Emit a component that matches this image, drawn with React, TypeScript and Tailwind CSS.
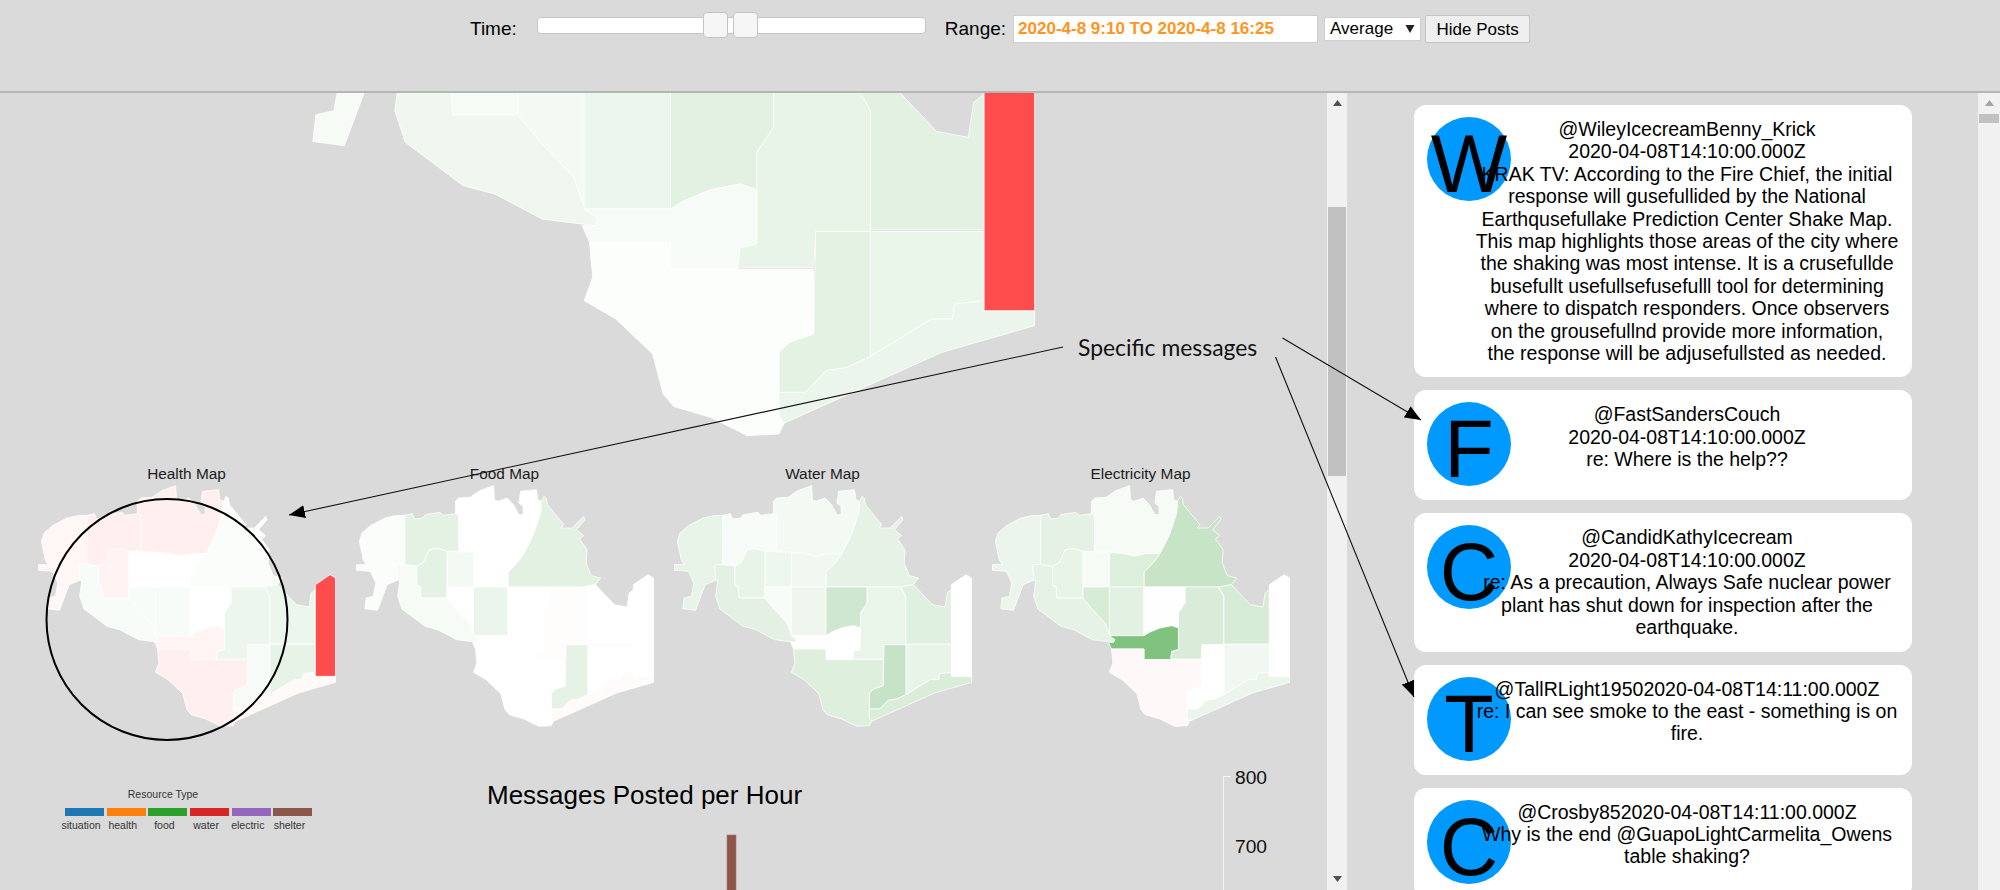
const REGIONS = [
  "147,197 125,198 100,205 65,228 45,250 39,275 48,330 55,345 32,345 32,362 65,365 78,400 72,440 55,445 52,477 82,482 105,405 130,392 128,345 147,345",
  "147,197 165,192 170,208 190,205 195,195 230,188 238,197 267,192 275,195 275,305 248,305 225,297 205,300 198,320 190,340 175,350 147,345",
  "267,192 267,155 275,145 302,143 325,123 358,108 360,150 368,155 390,145 405,165 418,195 428,195 428,170 418,160 422,125 460,120 463,150 472,155 470,190 452,258 430,312 395,312 368,320 345,312 310,308 275,305 275,195",
  "472,155 478,140 483,145 486,165 525,225 518,235 545,235 572,200 575,210 555,240 572,258 562,268 580,300 578,340 590,378 612,385 600,405 570,412 392,412 392,368 415,338 430,312 452,258 470,190",
  "310,308 345,312 368,320 395,312 430,312 415,338 392,368 392,412 310,412",
  "247,305 310,308 310,412 247,412",
  "205,300 225,297 247,305 247,445 185,445 183,410 175,408 175,350 190,340 198,320",
  "128,345 147,345 175,350 175,408 183,410 185,445 247,445 270,480 300,520 310,555 323,570 320,578 270,570 225,540 195,530 140,478 130,440 135,392 130,392",
  "247,412 310,412 310,555 300,520 270,480 247,445",
  "310,412 392,412 392,558 310,558",
  "392,412 490,412 490,460 474,490 474,535 458,528 430,535 405,548 392,558",
  "310,558 392,558 405,548 430,535 458,528 474,535 474,600 458,605 456,630 392,630 392,598 315,598 308,578 320,578 323,570",
  "490,412 568,412 582,440 582,585 530,585 528,628 456,628 458,605 474,600 474,490 490,460",
  "570,412 600,405 645,465 675,472 680,430 690,420 690,583 582,583 582,440",
  "582,585 690,585 690,668 662,672 660,690 640,690 582,735",
  "530,585 582,585 582,735 560,748 540,752 520,778 495,778 495,730 505,718 528,708",
  "315,598 392,598 392,630 528,630 528,708 505,718 495,730 495,805 500,815 495,828 465,830 430,808 395,795 385,780 375,732 340,690 310,668 318,640",
  "495,778 520,778 540,752 560,748 582,735 640,690 660,690 662,672 690,668 690,680 738,680 738,698 650,730 500,815 495,805",
  "690,405 725,375 738,385 738,680 690,680",
];

const BIG = ["#f6fbf6","#f3f9f3","#f3f9f3","#e7f3e7","#eff7ef","#f3faf3","#f5fbf5","#eff7ef","#f3faf3","#ecf6ec","#e2f1e2","#f7fbf8","#e8f4e8","#e2f1e2","#ebf6eb","#e3f2e3","#fcfefc","#ecf5ec","#ff4d4d"];
const HEALTH = ["#fff6f6","#fff0ef","#fff0ef","#fafdfa","#ffffff","#ffffff","#fff3f3","#f7fcf8","#f8fcf8","#f8fcf8","#ffffff","#fff5f4","#ecf6ec","#ecf6ec","#e8f3e8","#f7fbf7","#fff0ef","#fff9f8","#ff4d4d"];
const FOOD = ["#fafdfa","#e3f2e3","#ffffff","#e3f1e3","#ffffff","#f3faf3","#e4f2e4","#f6fbf6","#ffffff","#ebf5eb","#ffffff","#ffffff","#fffdfc","#ffffff","#ffffff","#e6f2e6","#ffffff","#fffbfa","#ffffff"];
const WATER = ["#e9f4e9","#f7fcf8","#f3faf3","#e7f2e7","#f1f8f1","#eef7ee","#e9f4e9","#e3f0e3","#f8fcf8","#eef6ee","#cfe7cf","#ffffff","#eaf5ea","#e0f0e0","#e9f4e9","#c7e3c7","#deefde","#d9edd9","#ffffff"];
const ELEC = ["#ecf5ec","#e4f1e4","#f6fbf6","#c7e4c7","#dcefdc","#f6fbf6","#e9f4e9","#e6f2e6","#d7ecd7","#e2f1e2","#fffefe","#7fc37f","#d9ecd9","#d7ecd7","#f1f8f1","#ffffff","#fff8f8","#ebf5eb","#ffffff"];

function MapShape({ colors, className, viewBox }: { colors: string[]; className: string; viewBox: string }) {
  return (
    <svg className={className} viewBox={viewBox} preserveAspectRatio="none">
      {REGIONS.map((points, i) => (
        <polygon key={i} points={points} fill={colors[i]} stroke="#ffffff" strokeWidth={0.8} vectorEffect="non-scaling-stroke" strokeLinejoin="round" />
      ))}
    </svg>
  );
}

function SmallMap({ title, colors }: { title: string; colors: string[] }) {
  return (
    <div className="w-[318px] shrink-0">
      <div className="pl-[6px] h-[21px] text-center text-[15.4px] leading-[24px] text-[#1c1c1c]">{title}</div>
      <MapShape colors={colors} viewBox="0 100 745 740" className="block w-[313.5px] h-[246.7px]" />
    </div>
  );
}

function Triangle({ down, tone }: { down?: boolean; tone: string }) {
  return (
    <svg width="9" height="6" viewBox="0 0 9 6" className="block">
      <polygon points={down ? "0,0 9,0 4.5,6" : "0,6 9,6 4.5,0"} fill={tone} />
    </svg>
  );
}

const POSTS = [
  { letter: "W", lines: ["@WileyIcecreamBenny_Krick", "2020-04-08T14:10:00.000Z"], body: "KRAK TV: According to the Fire Chief, the initial response will gusefullided by the National Earthqusefullake Prediction Center Shake Map. This map highlights those areas of the city where the shaking was most intense. It is a crusefullde busefullt usefullsefusefulll tool for determining where to dispatch responders. Once observers\non the grousefullnd provide more information,\nthe response will be adjusefullsted as needed." },
  { letter: "F", lines: ["@FastSandersCouch", "2020-04-08T14:10:00.000Z"], body: "re: Where is the help??" },
  { letter: "C", lines: ["@CandidKathyIcecream", "2020-04-08T14:10:00.000Z"], body: "re: As a precaution, Always Safe nuclear power plant has shut down for inspection after the earthquake." },
  { letter: "T", lines: ["@TallRLight19502020-04-08T14:11:00.000Z"], body: "re: I can see smoke to the east - something is on fire." },
  { letter: "C", lines: ["@Crosby852020-04-08T14:11:00.000Z"], body: "Why is the end @GuapoLightCarmelita_Owens table shaking?" },
];

const LEGEND = [
  { name: "situation", color: "bg-[#1f77b4]" },
  { name: "health", color: "bg-[#ff7f0e]" },
  { name: "food", color: "bg-[#2ca02c]" },
  { name: "water", color: "bg-[#d62728]" },
  { name: "electric", color: "bg-[#9467bd]" },
  { name: "shelter", color: "bg-[#8c564b]" },
];

export default function App() {
  return (
    <div className="relative w-[2000px] h-[890px] overflow-hidden bg-[#dadada] text-black font-['Liberation_Sans',Arial,sans-serif]">
      <header className="flex h-[93px] items-start border-b-2 border-[#b5b5b5] pl-[470px] text-[19px]">
        <span className="mt-[18px] leading-[22px]">Time:</span>
        <div className="relative ml-[20px] mt-[17px] h-[17px] w-[389px] rounded-[4px] border border-[#c5c5c5] bg-white">
          <span className="absolute left-[165px] top-[-6px] h-[26px] w-[25px] rounded-[4px] border border-[#c5c5c5] bg-[#f6f6f6]" />
          <span className="absolute left-[195px] top-[-6px] h-[26px] w-[25px] rounded-[4px] border border-[#c5c5c5] bg-[#f6f6f6]" />
        </div>
        <span className="ml-[19px] mt-[18px] leading-[22px]">Range:</span>
        <div className="ml-[7px] mt-[15px] flex h-[28px] w-[305px] items-center border border-[#cfcfcf] bg-white pl-[4px] text-[17px] font-bold text-[#ff9420]">
          2020-4-8 9:10 TO 2020-4-8 16:25
        </div>
        <div className="ml-[6px] mt-[17px] flex h-[24px] w-[97px] items-center justify-between border border-[#cfcfcf] bg-white px-[5px] text-[17px]">
          <span>Average</span>
          <svg width="10" height="8" viewBox="0 0 10 8"><polygon points="0.5,0 9.5,0 5,8" fill="#222" /></svg>
        </div>
        <button className="ml-[4px] mt-[15px] h-[28px] w-[105px] rounded-[2px] border border-[#c4c4c4] bg-[#efefef] text-[17px] leading-none">Hide Posts</button>
      </header>

      <div className="flex h-[797px]">
        <main className="w-[1327px] shrink-0 overflow-hidden">
          <div className="h-[369px] overflow-hidden">
            <MapShape colors={BIG} viewBox="0 0 745 840" className="ml-[258px] mt-[-349px] block h-[700px] w-[784px]" />
          </div>
          <div className="flex pl-[24.5px]">
            <SmallMap title="Health Map" colors={HEALTH} />
            <SmallMap title="Food Map" colors={FOOD} />
            <SmallMap title="Water Map" colors={WATER} />
            <SmallMap title="Electricity Map" colors={ELEC} />
          </div>
          <div className="mt-[4px] flex h-[160px]">
            <div className="ml-[65px] w-[422px] shrink-0 pt-[54px] text-[#333]">
              <div className="w-[196px] text-center text-[10.5px] leading-[13px]">Resource Type</div>
              <div className="mt-[7px] flex gap-[2.7px]">
                {LEGEND.map((item) => (
                  <div key={item.name} className="w-[39px]">
                    <div className={`h-[8px] ${item.color}`} />
                    <div className="mt-[3.5px] flex w-[32px] justify-center whitespace-nowrap text-[10.5px] leading-[13px]">{item.name}</div>
                  </div>
                ))}
              </div>
            </div>
            <div className="relative w-[840px] shrink-0">
              <h2 className="pt-[46px] text-[26px] font-normal leading-[30px]">Messages Posted per Hour</h2>
              <svg className="absolute inset-0" width="840" height="160">
                <rect x="240" y="101" width="9" height="59" fill="#8c564b" stroke="#a9776c" strokeWidth="0.6" />
                <path d="M744 42.5 H736.5 V160" fill="none" stroke="#f4f4f4" strokeWidth="1" />
                <text x="748" y="49.5" fontSize="19.2" fill="#111">800</text>
                <text x="748" y="118.5" fontSize="19.2" fill="#111">700</text>
              </svg>
            </div>
          </div>
        </main>

        <div className="flex w-[20px] shrink-0 flex-col items-center bg-[#f1f1f1] pt-[7px] pb-[8px]">
          <Triangle tone="#505050" />
          <div className="mt-[101px] h-[269px] w-[18px] bg-[#c1c1c1]" />
          <div className="flex-1" />
          <Triangle down tone="#505050" />
        </div>

        <aside className="flex w-[631px] shrink-0 flex-col gap-[13px] overflow-hidden pl-[67px] pt-[12px]">
          {POSTS.map((post, i) => (
            <article key={i} className="flex min-h-[110px] w-[498px] shrink-0 items-start rounded-[12px] bg-white pl-[13px] pt-[12px] pb-[13px]">
              <div className="h-[84px] w-[84px] shrink-0 rounded-full bg-[#0099ff] text-center text-[81px] leading-[95px]">{post.letter}</div>
              <div className="relative ml-[-44px] mt-px w-[440px] shrink-0 text-center text-[19.5px] leading-[22.4px]">
                {post.lines.map((line) => (
                  <div key={line}>{line}</div>
                ))}
                <div className="whitespace-pre-line">{post.body}</div>
              </div>
            </article>
          ))}
        </aside>

        <div className="flex w-[22px] shrink-0 flex-col items-center bg-[#f1f1f1] pt-[7px]">
          <Triangle tone="#a3a3a3" />
          <div className="mt-[8px] h-[9px] w-[20px] bg-[#c1c1c1]" />
        </div>
      </div>

      <svg className="pointer-events-none absolute inset-0" width="2000" height="890">
        <defs>
          <marker id="head" markerUnits="userSpaceOnUse" markerWidth="17" markerHeight="13" refX="16" refY="6.5" orient="auto">
            <path d="M0 0 L16 6.5 L0 13 Z" fill="#000" />
          </marker>
        </defs>
        <line x1="1063" y1="347" x2="289" y2="515" stroke="#111" strokeWidth="1.1" markerEnd="url(#head)" />
        <line x1="1282.5" y1="338" x2="1421" y2="420" stroke="#111" strokeWidth="1.1" markerEnd="url(#head)" />
        <line x1="1275.5" y1="357" x2="1414" y2="697" stroke="#111" strokeWidth="1.1" markerEnd="url(#head)" />
        <ellipse cx="167" cy="619.5" rx="120.5" ry="120.5" fill="none" stroke="#000" strokeWidth="2" />
      </svg>
      <span className="absolute left-[1078px] top-[333px] whitespace-nowrap font-['Lato',sans-serif] text-[22.9px] leading-[28px] text-[#111]">Specific messages</span>
    </div>
  );
}
